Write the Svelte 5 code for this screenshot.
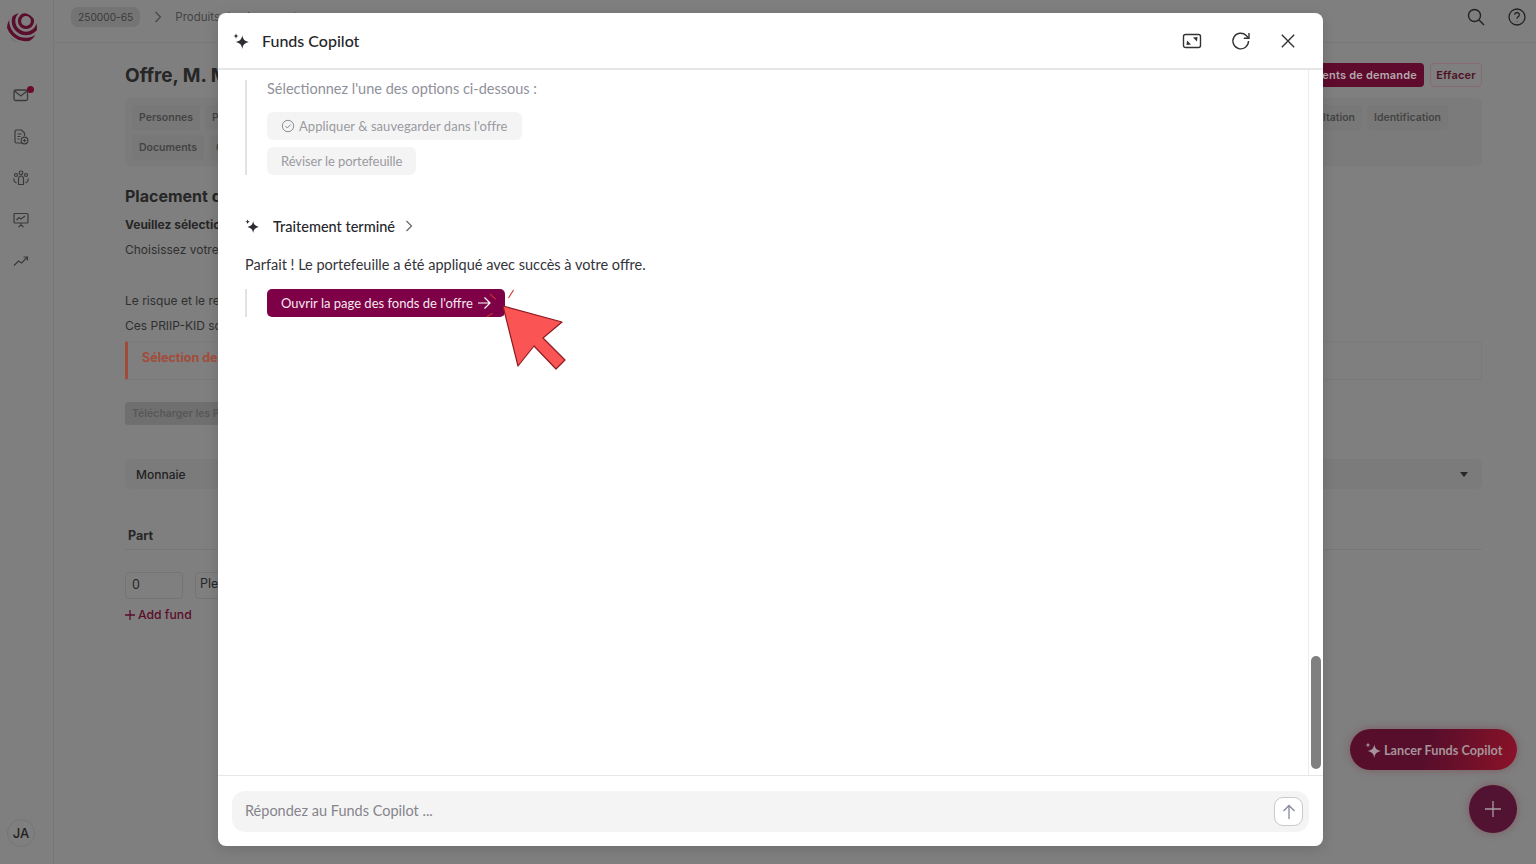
<script>
  const tabsTop = ['Personnes', 'Projet'];
  const tabsRight = ['Consultation', 'Identification'];
  const tabsBottom = ['Documents', 'Offre'];
</script>

{#snippet sparkle(size)}
  <svg width={size} height={size} viewBox="0 0 16 16" fill="currentColor">
    <path d="M9.300 2.200c.7 4 2 5.600 6.500 6.800-4.500 1.200-5.800 2.800-6.500 6.900-.7-4.100-2-5.700-6.500-6.900 4.500-1.200 5.800-2.800 6.500-6.800z" />
    <path d="M3 .2c.3 1.800.9 2.400 2.700 2.800-1.800.4-2.400 1-2.700 2.800C2.700 4 2.100 3.400.3 3 2.100 2.600 2.700 2 3 .2z" />
  </svg>
{/snippet}

<div class="page">
  <aside class="side">
    <svg class="logo" width="32" height="32" viewBox="0 0 32 32">
      <defs>
        <clipPath id="ball"><circle cx="16" cy="16" r="15" /></clipPath>
      </defs>
      <g clip-path="url(#ball)" fill="none" stroke="#5b0d2c">
        <circle cx="20" cy="9" r="6.500" stroke-width="3.200" />
        <circle cx="20" cy="9" r="12.500" stroke-width="3.600" />
        <circle cx="20" cy="9" r="18.500" stroke-width="3.400" />
        <circle cx="20" cy="9" r="24" stroke-width="2" />
      </g>
    </svg>
    <nav class="side-icons">
      <span class="mail">
        <svg width="18" height="18" viewBox="0 0 18 18" fill="none" stroke="#3a3a3a" stroke-width="1.3">
          <rect x="2" y="4" width="13.500" height="10.500" rx="1.500" />
          <path d="M2.500 5l6.300 5 6.200-5" />
        </svg>
        <i class="dot"></i>
      </span>
      <svg width="18" height="18" viewBox="0 0 18 18" fill="none" stroke="#3a3a3a" stroke-width="1.2">
        <path d="M10 15H4.500A1.500 1.500 0 0 1 3 13.500V3.500A1.500 1.500 0 0 1 4.500 2h5l3 3v3" />
        <path d="M5.500 6h4M5.500 8.500h3M5.500 11h2" />
        <circle cx="12.500" cy="12.500" r="3.300" />
        <path d="M12.500 11v3M11 12.500h3" />
      </svg>
      <svg width="18" height="18" viewBox="0 0 18 18" fill="none" stroke="#3a3a3a" stroke-width="1.2">
        <circle cx="9" cy="3.800" r="1.800" />
        <path d="M6.500 15.500V10c0-1.800 1-3 2.500-3s2.500 1.200 2.500 3v5.500z" />
        <circle cx="4" cy="6" r="1.500" />
        <circle cx="14" cy="6" r="1.500" />
        <path d="M4.500 14C2.500 13 1.500 11.500 2 9.500M13.500 14c2-1 3-2.500 2.500-4.500" />
      </svg>
      <svg width="18" height="18" viewBox="0 0 18 18" fill="none" stroke="#3a3a3a" stroke-width="1.2">
        <rect x="2" y="2.500" width="14" height="9.500" rx="1" />
        <path d="M4.500 9l2.500-2.500 2 1.500 4-3M9 12v2M6.500 16L9 14l2.500 2" />
      </svg>
      <svg width="18" height="18" viewBox="0 0 18 18" fill="none" stroke="#3a3a3a" stroke-width="1.2">
        <path d="M2 13.500l4.500-4.500 3 2 6-6M11.500 5h4v3.500" />
      </svg>
    </nav>
    <div class="avatar">JA</div>
  </aside>

  <div class="main">
    <header class="top">
      <span class="crumb">250000-65</span>
      <svg width="12" height="12" viewBox="0 0 12 12" fill="none" stroke="#444" stroke-width="1.1"><path d="M3.500 1l5 5-5 5" /></svg>
      <span class="crumb-link">Produits de placement</span>
      <span class="top-icons">
        <svg width="20" height="20" viewBox="0 0 20 20" fill="none" stroke="#222" stroke-width="1.4">
          <circle cx="8.500" cy="8.500" r="6" /><path d="M13 13l5 5" />
        </svg>
        <svg width="20" height="20" viewBox="0 0 20 20" fill="none" stroke="#222" stroke-width="1.3">
          <circle cx="10" cy="10" r="8" />
          <path d="M7.700 7.800a2.300 2.300 0 1 1 3.500 2c-.8.500-1.200 1-1.200 1.900" />
          <path d="M10 14v.4" />
        </svg>
      </span>
    </header>

    <section class="content">
      <div class="title-row">
        <h1>Offre, M. Martin</h1>
        <button class="primary">Téléchargements de demande</button>
        <button class="outline">Effacer</button>
      </div>

      <div class="tabs">
        <div class="tab-row">
          {#each tabsTop as t}<span class="tab">{t}</span>{/each}
          <span class="tab-right">
            {#each tabsRight as t}<span class="tab">{t}</span>{/each}
          </span>
        </div>
        <div class="tab-row">
          {#each tabsBottom as t}<span class="tab">{t}</span>{/each}
        </div>
      </div>

      <h2>Placement de l'offre</h2>
      <p class="strong">Veuillez sélectionner</p>
      <p class="txt">Choisissez votre portefeuille</p>
      <p class="txt risk">Le risque et le rendement</p>
      <p class="txt">Ces PRIIP-KID sont disponibles</p>
      <div class="callout">Sélection de fonds</div>
      <span class="disabled">Télécharger les PRIIP</span>
      <div class="select">
        <span>Monnaie</span>
        <i class="caret"></i>
      </div>
      <div class="part">Part</div>
      <div class="fund-row">
        <span class="field small">0</span>
        <span class="field wide">Plein</span>
      </div>
      <div class="add">
        <svg width="10" height="10" viewBox="0 0 10 10" stroke="#5b0d2c" stroke-width="1.3"><path d="M5 0v10M0 5h10" /></svg>
        Add fund
      </div>
    </section>
  </div>

  <div class="launch">
    {@render sparkle(16)}
    <span>Lancer Funds Copilot</span>
  </div>
  <div class="fab">
    <svg width="16" height="16" viewBox="0 0 16 16" stroke="#a79aa0" stroke-width="1.3"><path d="M8 0v16M0 8h16" /></svg>
  </div>

  <div class="modal">
    <header class="m-head">
      <span class="m-spark">{@render sparkle(16)}</span>
      <span class="m-title">Funds Copilot</span>
      <span class="m-actions">
        <svg width="20" height="20" viewBox="0 0 20 20" fill="none" stroke="#333" stroke-width="1.4">
          <rect x="1.500" y="3.500" width="17" height="13" rx="2" />
          <path d="M4.500 14l4.500-.6-4-3.900z" fill="#333" stroke="none" />
          <path d="M15.500 6L11 6.600l4 3.900z" fill="#333" stroke="none" />
        </svg>
        <svg width="20" height="20" viewBox="0 0 20 20" fill="none" stroke="#333" stroke-width="1.4">
          <path d="M17.500 10a7.800 7.800 0 1 1-2.300-5.500l2.300 2.500" />
          <path d="M18 2v5.200h-5.200" />
        </svg>
        <svg class="close" width="20" height="20" viewBox="0 0 20 20" fill="none" stroke="#333" stroke-width="1.4">
          <path d="M3.800 3.800l12.400 12.400M16.200 3.800L3.800 16.200" />
        </svg>
      </span>
    </header>

    <div class="m-body">
      <div class="thread">
        <div class="quote first">
          <p class="hint">Sélectionnez l'une des options ci-dessous :</p>
          <button class="opt save">
            <svg width="14" height="14" viewBox="0 0 14 14" fill="none" stroke="#8d8d94" stroke-width="1">
              <circle cx="7" cy="7" r="5.700" /><path d="M4.500 7.200l1.800 1.800 3.300-3.500" />
            </svg>
            Appliquer &amp; sauvegarder dans l'offre
          </button>
          <button class="opt">Réviser le portefeuille</button>
        </div>

        <div class="step">
          <span class="step-spark">{@render sparkle(14)}</span>
          <span>Traitement terminé</span>
          <svg class="chev" width="10" height="12" viewBox="0 0 10 12" fill="none" stroke="#666" stroke-width="1.2"><path d="M2.500 1l5 5-5 5" /></svg>
        </div>

        <p class="answer">Parfait ! Le portefeuille a été appliqué avec succès à votre offre.</p>

        <div class="quote last">
          <div class="cta-wrap">
            <button class="cta">
              Ouvrir la page des fonds de l'offre
              <svg width="14" height="14" viewBox="0 0 14 14" fill="none" stroke="#fff" stroke-width="1.2"><path d="M1 7h12M7.500 1.500L13 7l-5.500 5.500" /></svg>
            </button>
            <svg class="pointer" width="90" height="90" viewBox="0 0 90 90">
              <g fill="none" stroke="#c8322f" stroke-width="1.1">
                <path d="M25.500 10l5-8" />
                <path d="M7 6l5.700 5.300" />
                <path d="M3.700 28.700l6-3.400" />
              </g>
              <path d="M20 18l59 16-19 16 22 22-9 9-22-23-16 20z" fill="#fb5454" stroke="#8f1b22" stroke-width="1.2" stroke-linejoin="round" />
            </svg>
          </div>
        </div>
      </div>
      <div class="scroll"><i></i></div>
    </div>

    <footer class="m-foot">
      <div class="input">
        <span class="placeholder">Répondez au Funds Copilot ...</span>
        <span class="send">
          <svg width="14" height="16" viewBox="0 0 14 16" fill="none" stroke="#858a99" stroke-width="1.3"><path d="M7 15V1.500M1.500 7L7 1.500 12.500 7" /></svg>
        </span>
      </div>
    </footer>
  </div>
</div>

<style>
  :global(body) {
    margin: 0;
    font-family: Inter, "Liberation Sans", sans-serif;
    background: #7f7f7f;
  }
  p, h1, h2 {
    margin: 0;
  }
  button {
    font: inherit;
    border: 0;
  }
  .page {
    display: flex;
    height: 864px;
    overflow: hidden;
    background: #7f7f7f;
    color: #262626;
  }
  .side {
    box-sizing: border-box;
    width: 54px;
    flex: none;
    display: flex;
    flex-direction: column;
    align-items: center;
    padding: 12px 11px 0 0;
    border-right: 1px solid #777;
  }
  .logo {
    flex: none;
    margin-left: 2px;
  }
  .side-icons {
    display: flex;
    flex-direction: column;
    gap: 23.5px;
    margin-top: 42px;
    align-items: center;
  }
  .mail {
    position: relative;
    display: block;
    height: 18px;
  }
  .dot {
    position: absolute;
    right: -4px;
    top: 0;
    width: 7px;
    height: 7px;
    border-radius: 50%;
    background: #6a0b2e;
  }
  .avatar {
    box-sizing: border-box;
    margin-top: auto;
    margin-bottom: 17px;
    width: 28px;
    height: 28px;
    border: 1px solid #757575;
    border-radius: 50%;
    font-size: 13px;
    font-weight: 500;
    line-height: 26px;
    text-align: center;
    color: #1f1f1f;
  }
  .main {
    flex: 1;
    min-width: 0;
  }
  .top {
    box-sizing: border-box;
    height: 43px;
    display: flex;
    align-items: center;
    gap: 12px;
    padding: 0 9px 8px 17px;
    border-bottom: 1px solid #787878;
  }
  .crumb {
    background: #747474;
    border-radius: 7px;
    padding: 4px 7px;
    font-size: 10.2px;
    color: #3a3a3a;
  }
  .crumb-link {
    margin-left: -1px;
    font-size: 11.5px;
    color: #444;
  }
  .top-icons {
    margin-left: auto;
    display: flex;
    gap: 21px;
  }
  .content {
    padding: 20px 54px 0 71px;
  }
  .title-row {
    display: flex;
    align-items: center;
    gap: 6px;
    height: 24px;
  }
  h1 {
    font-size: 19px;
    font-weight: 700;
    margin-right: auto;
    color: #262626;
  }
  .primary {
    background: #5e0b2d;
    color: #b4a8ac;
    border-radius: 4px;
    font-size: 11px;
    font-weight: 600;
    letter-spacing: 0.2px;
    height: 24px;
    padding: 0 7px;
  }
  .outline {
    box-sizing: border-box;
    width: 52px;
    background: transparent;
    border: 1px solid #8a6a72;
    color: #4f1025;
    border-radius: 4px;
    font-size: 11px;
    font-weight: 600;
    letter-spacing: 0.2px;
    height: 24px;
    padding: 0;
  }
  .tabs {
    margin-top: 11px;
    background: #7b7b7b;
    border-radius: 6px;
    padding: 7px 7px 6px;
    display: flex;
    flex-direction: column;
    gap: 5px;
  }
  .tab-row {
    display: flex;
    gap: 5px;
  }
  .tab-right {
    margin-left: auto;
    display: flex;
    gap: 5px;
    margin-right: 27px;
  }
  .tab {
    background: #787878;
    border-radius: 4px;
    font-size: 10.5px;
    font-weight: 600;
    line-height: 25px;
    padding: 0 7px;
    color: #444;
  }
  h2 {
    margin-top: 19px;
    font-size: 16px;
    font-weight: 700;
    line-height: 22px;
  }
  .strong {
    margin-top: 10px;
    font-size: 12px;
    font-weight: 700;
    line-height: 16px;
  }
  .txt {
    margin-top: 9px;
    font-size: 12px;
    line-height: 16px;
    color: #2f2f2f;
  }
  .risk {
    margin-top: 35px;
  }
  .callout {
    margin-top: 7px;
    height: 39px;
    box-sizing: border-box;
    border: 1px solid #7a7a7a;
    border-left: 3px solid #a04a3a;
    border-radius: 2px;
    padding-left: 14px;
    font-size: 12.5px;
    font-weight: 700;
    line-height: 32px;
    color: #a34c3a;
  }
  .disabled {
    display: inline-block;
    margin-top: 22px;
    background: #6f6f6f;
    border-radius: 3px;
    font-size: 10.5px;
    font-weight: 600;
    line-height: 23px;
    padding: 0 7px;
    width: 120px;
    color: #585858;
  }
  .select {
    margin-top: 34px;
    height: 30px;
    display: flex;
    align-items: center;
    justify-content: space-between;
    padding: 0 14px 0 11px;
    background: #7b7b7b;
    border-radius: 6px;
    font-size: 12px;
    font-weight: 500;
    color: #222;
  }
  .caret {
    border: 4px solid transparent;
    border-top: 5px solid #262626;
    border-bottom: 0;
  }
  .part {
    margin-top: 38px;
    padding: 0 3px 5px;
    font-size: 12.5px;
    font-weight: 700;
    line-height: 17px;
    border-bottom: 1px solid #777;
  }
  .fund-row {
    display: flex;
    gap: 12px;
    margin-top: 22px;
  }
  .field {
    box-sizing: border-box;
    height: 27px;
    border: 1px solid #747474;
    border-radius: 4px;
    font-size: 12.5px;
    line-height: 24px;
    padding: 0 6px;
  }
  .small {
    width: 58px;
  }
  .wide {
    width: 300px;
    padding-left: 4px;
    line-height: 21px;
  }
  .add {
    display: flex;
    align-items: center;
    gap: 3px;
    margin-top: 8px;
    font-size: 12.2px;
    font-weight: 500;
    line-height: 16px;
    color: #5b0d2c;
  }
  .launch {
    position: absolute;
    left: 1350px;
    top: 729px;
    box-sizing: border-box;
    width: 167px;
    height: 41px;
    display: flex;
    align-items: center;
    gap: 3px;
    padding-left: 15px;
    border-radius: 21px;
    background: linear-gradient(105deg, #560e2b 45%, #8b1228);
    box-shadow: 0 0 9px rgba(120, 20, 40, 0.35);
    color: #a59499;
    font-family: Lato, sans-serif;
    font-size: 12.7px;
    font-weight: 700;
  }
  .fab {
    position: absolute;
    left: 1469px;
    top: 785px;
    width: 48px;
    height: 48px;
    display: flex;
    align-items: center;
    justify-content: center;
    border-radius: 50%;
    background: #521231;
    box-shadow: 0 0 9px rgba(120, 20, 40, 0.35);
  }
  .modal {
    position: absolute;
    left: 218px;
    top: 13px;
    width: 1105px;
    height: 833px;
    display: flex;
    flex-direction: column;
    background: #fff;
    border-radius: 8px;
    box-shadow: 0 3px 14px rgba(0, 0, 0, 0.14);
    overflow: hidden;
    font-family: Lato, "Open Sans", sans-serif;
    color: #26262b;
  }
  .m-head {
    box-sizing: border-box;
    height: 57px;
    flex: none;
    display: flex;
    align-items: center;
    padding: 1px 25px 0 15px;
    border-bottom: 2px solid #e6e6e9;
  }
  .m-spark {
    display: flex;
    color: #2c2c33;
  }
  .m-title {
    margin: 0 0 2px 13px;
    font-size: 16px;
    font-weight: 500;
  }
  .m-actions {
    margin-left: auto;
    display: flex;
    gap: 29px;
  }
  .close {
    margin-left: -2px;
  }
  .m-body {
    flex: 1;
    min-height: 0;
    display: flex;
    border-bottom: 1px solid #e6e6e9;
  }
  .thread {
    flex: 1;
    padding: 10px 27px 0;
  }
  .scroll {
    box-sizing: border-box;
    width: 15px;
    flex: none;
    padding: 586px 2px 6px 2px;
    border-left: 1px solid #ececee;
  }
  .scroll i {
    display: block;
    height: 113px;
    border-radius: 5px;
    background: #808080;
  }
  .quote {
    display: flex;
    flex-direction: column;
    align-items: flex-start;
    gap: 7px;
    padding-left: 20px;
    border-left: 2px solid #e2e2e6;
  }
  .hint {
    font-size: 14.5px;
    line-height: 18px;
    color: #90909a;
    margin-bottom: 7px;
  }
  .opt {
    display: inline-flex;
    align-items: center;
    gap: 4px;
    height: 28px;
    padding: 0 14px;
    border-radius: 6px;
    background: #f4f4f5;
    font-size: 13px;
    letter-spacing: -0.08px;
    color: #9a9aa0;
  }
  .save {
    letter-spacing: 0.05px;
  }
  .step {
    display: flex;
    align-items: center;
    margin-top: 41px;
    font-size: 14.5px;
    font-weight: 500;
    height: 20px;
  }
  .step-spark {
    display: flex;
    width: 28px;
    color: #2c2c33;
  }
  .chev {
    margin-left: 9px;
  }
  .answer {
    margin-top: 19px;
    font-size: 14.5px;
    line-height: 20px;
    color: #33333a;
  }
  .cta-wrap {
    position: relative;
  }
  .last {
    margin-top: 14px;
  }
  .cta {
    display: inline-flex;
    align-items: center;
    gap: 4px;
    height: 28px;
    padding: 0 14px 1px;
    border-radius: 5px;
    background: #7e0046;
    color: #f4e8ee;
    font-size: 13px;
  }
  .pointer {
    position: absolute;
    left: 216px;
    top: -1px;
    overflow: visible;
  }
  .m-foot {
    flex: none;
    height: 70px;
    box-sizing: border-box;
    padding: 15px 14px 14px;
  }
  .input {
    height: 41px;
    display: flex;
    align-items: center;
    justify-content: space-between;
    padding: 0 6px 0 13px;
    border-radius: 13px;
    background: #f4f4f5;
    font-size: 14.5px;
    color: #85858b;
  }
  .placeholder {
    margin-bottom: 2px;
  }
  .send {
    box-sizing: border-box;
    width: 29px;
    height: 29px;
    display: flex;
    align-items: center;
    justify-content: center;
    border: 1px solid #c9c9ce;
    border-radius: 9px;
    background: #fff;
  }
</style>
